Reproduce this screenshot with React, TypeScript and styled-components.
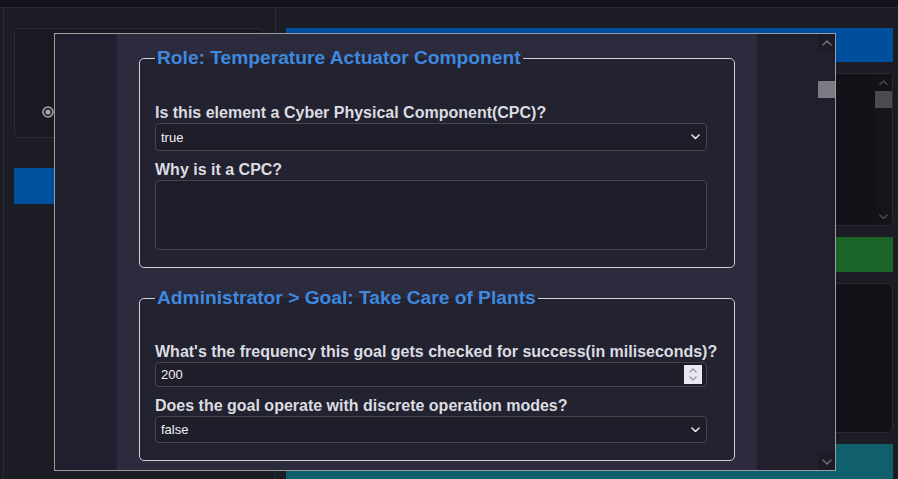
import React from "react";
import styled, { createGlobalStyle } from "styled-components";

const GlobalStyle = createGlobalStyle`
  html, body { margin: 0; padding: 0; background: #1c1c24; }
  body { font-family: "Liberation Sans", Arial, sans-serif; overflow: hidden; }
  * { box-sizing: border-box; }
`;

const Page = styled.div`
  position: relative;
  width: 898px;
  height: 479px;
  display: flex;
  flex-direction: column;
  background: #1c1c24;
  overflow: hidden;
`;

const TopStrip = styled.div`
  height: 8px;
  flex: none;
  background: #13131b;
  border-bottom: 1px solid #2a2a32;
`;

const Main = styled.div`
  flex: 1;
  display: flex;
  min-height: 0;
`;

const LeftPanel = styled.div`
  margin-left: 3px;
  width: 273px;
  flex: none;
  border-left: 1px solid #2a2a31;
  border-right: 1px solid #2a2a31;
  padding: 20px 11px 0 10px;
  display: flex;
  flex-direction: column;
  gap: 30px;
`;

const Card = styled.div`
  height: 110px;
  border: 1px solid #2c2c2e;
  border-radius: 5px;
  background: #191921;
  position: relative;
  display: flex;
  align-items: flex-end;
  padding: 0 0 19px 27px;
`;

const BlueButton = styled.div`
  height: 36px;
  background: #0050a0;
`;

const RightPanel = styled.div`
  flex: 1;
  padding: 20px 5px 0 10px;
  display: flex;
  flex-direction: column;
  gap: 11px;
`;

const Bar = styled.div<{ $color: string; $h: number }>`
  height: ${(p) => p.$h}px;
  flex: none;
  background: ${(p) => p.$color};
`;

const ScrollBox = styled.div<{ $h: number }>`
  height: ${(p) => p.$h}px;
  flex: none;
  border: 1px solid #2a2a30;
  border-radius: 5px;
  background: #121219;
  display: flex;
  justify-content: flex-end;
  overflow: hidden;
`;

const BoxScrollbar = styled.div`
  width: 17px;
  background: #15151c;
  display: flex;
  flex-direction: column;
`;

const ArrowBtn = styled.div<{ $bg: string }>`
  width: 17px;
  height: 17px;
  flex: none;
  background: ${(p) => p.$bg};
  display: flex;
  align-items: center;
  justify-content: center;
`;

const Thumb = styled.div<{ $color: string; $top: number }>`
  width: 17px;
  height: 17px;
  margin-top: ${(p) => p.$top}px;
  background: ${(p) => p.$color};
  flex: none;
`;

const Spacer = styled.div`
  flex: 1;
`;

/* Modal */
const Modal = styled.div`
  position: absolute;
  left: 54px;
  top: 33px;
  width: 782px;
  height: 438px;
  border: 1px solid #9c9ca0;
  display: flex;
  background: #1f1f2e;
`;

const SideCol = styled.div<{ $w: number }>`
  width: ${(p) => p.$w}px;
  flex: none;
  background: #1f1f2e;
`;

const Content = styled.div`
  width: 640px;
  flex: none;
  background: #2b2b3d;
  padding: 13px 22px 0 22px;
  overflow: hidden;
  display: flex;
  flex-direction: column;
  gap: 19px;
`;

const ModalScrollbar = styled.div`
  width: 17px;
  flex: none;
  background: #1f1f2e;
  display: flex;
  flex-direction: column;
`;

const Fieldset = styled.fieldset<{ $pt: number; $pb: number }>`
  margin: 0;
  min-width: 0;
  flex: none;
  border: 1px solid #d2d2d6;
  border-radius: 5px;
  background: #222230;
  padding: ${(p) => p.$pt}px 27px ${(p) => p.$pb}px 15px;
  display: flex;
  flex-direction: column;
`;

const Legend = styled.legend`
  padding: 0 2px;
  font-size: 19.2px;
  line-height: 22px;
  font-weight: bold;
  color: #3e89df;
`;

const Label = styled.label<{ $mt: number }>`
  display: block;
  margin-top: ${(p) => p.$mt}px;
  margin-bottom: 1px;
  font-size: 16px;
  line-height: 18px;
  font-weight: bold;
  color: #dcdce0;
  white-space: nowrap;
`;

const InputShell = styled.div<{ $h: number }>`
  position: relative;
  height: ${(p) => p.$h}px;
  flex: none;
  border: 1px solid #45454c;
  border-radius: 4px;
  background: #1e1e2b;
  display: flex;
  align-items: center;
  padding: 0 6px 0 5px;
  font-size: 13px;
  color: #f2f2f2;
`;

const Value = styled.span`
  flex: 1;
`;

const TextArea = styled.textarea`
  display: block;
  flex: none;
  width: 100%;
  height: 70px;
  resize: none;
  border: 1px solid #45454c;
  border-radius: 4px;
  background: #1e1e2b;
  color: #f2f2f2;
  font-family: "Liberation Sans", Arial, sans-serif;
  font-size: 13px;
  outline: none;
`;

const Spinner = styled.div`
  position: absolute;
  right: 4px;
  top: 2px;
  width: 18px;
  height: 19px;
  background: #e9e9ef;
  display: flex;
  align-items: center;
  justify-content: center;
`;

const Chevron = ({ up = false, color = "#f0f0f0", size = 9 }: { up?: boolean; color?: string; size?: number }) => (
  <svg width={size} height={size * 0.6} viewBox="0 0 10 6">
    <polyline
      points={up ? "1,5 5,1 9,5" : "1,1 5,5 9,1"}
      fill="none"
      stroke={color}
      strokeWidth="1.6"
      strokeLinecap="round"
      strokeLinejoin="round"
    />
  </svg>
);

const SpinIcon = () => (
  <svg width="10" height="15" viewBox="0 0 10 15">
    <polyline points="1.5,5.5 5,2 8.5,5.5" fill="none" stroke="#9a9aa4" strokeWidth="1.3" />
    <polyline points="1.5,9.5 5,13 8.5,9.5" fill="none" stroke="#9a9aa4" strokeWidth="1.3" />
  </svg>
);

const Radio = () => (
  <svg width="12" height="12" viewBox="0 0 12 12">
    <circle cx="6" cy="6" r="5" fill="#1a1a22" stroke="#a6a6aa" strokeWidth="1.6" />
    <circle cx="6" cy="6" r="2.6" fill="#a6a6aa" />
  </svg>
);

const Select = ({ value, h }: { value: string; h: number }) => (
  <InputShell $h={h}>
    <Value>{value}</Value>
    <Chevron size={9} />
  </InputShell>
);

export default function App() {
  return (
    <>
      <GlobalStyle />
      <Page>
        <TopStrip />
        <Main>
          <LeftPanel>
            <Card>
              <Radio />
            </Card>
            <BlueButton />
          </LeftPanel>
          <RightPanel>
            <Bar $color="#004f9e" $h={34} />
            <ScrollBox $h={153}>
              <BoxScrollbar>
                <ArrowBtn $bg="#131319">
                  <Chevron up color="#4a4a52" size={9} />
                </ArrowBtn>
                <Thumb $color="#4b4b51" $top={0} />
                <Spacer />
                <ArrowBtn $bg="#131319">
                  <Chevron color="#4a4a52" size={9} />
                </ArrowBtn>
              </BoxScrollbar>
            </ScrollBox>
            <Bar $color="#1b6429" $h={35} />
            <ScrollBox $h={150} />
            <Bar $color="#0f5f6d" $h={40} />
          </RightPanel>
        </Main>
        <Modal>
          <SideCol $w={62} />
          <Content>
            <Fieldset $pt={35} $pb={17}>
              <Legend>Role: Temperature Actuator Component</Legend>
              <Label $mt={0}>Is this element a Cyber Physical Component(CPC)?</Label>
              <Select value="true" h={28} />
              <Label $mt={10}>Why is it a CPC?</Label>
              <TextArea readOnly value="" />
            </Fieldset>
            <Fieldset $pt={34} $pb={17}>
              <Legend>Administrator &gt; Goal: Take Care of Plants</Legend>
              <Label $mt={0}>What's the frequency this goal gets checked for success(in miliseconds)?</Label>
              <InputShell $h={25}>
                <Value>200</Value>
                <Spinner>
                  <SpinIcon />
                </Spinner>
              </InputShell>
              <Label $mt={10}>Does the goal operate with discrete operation modes?</Label>
              <Select value="false" h={27} />
            </Fieldset>
          </Content>
          <SideCol $w={61} />
          <ModalScrollbar>
            <ArrowBtn $bg="#1b1b27">
              <Chevron up color="#6c6c76" size={10} />
            </ArrowBtn>
            <Thumb $color="#7b7b85" $top={30} />
            <Spacer />
            <ArrowBtn $bg="#1b1b27">
              <Chevron color="#6c6c76" size={10} />
            </ArrowBtn>
          </ModalScrollbar>
        </Modal>
      </Page>
    </>
  );
}
